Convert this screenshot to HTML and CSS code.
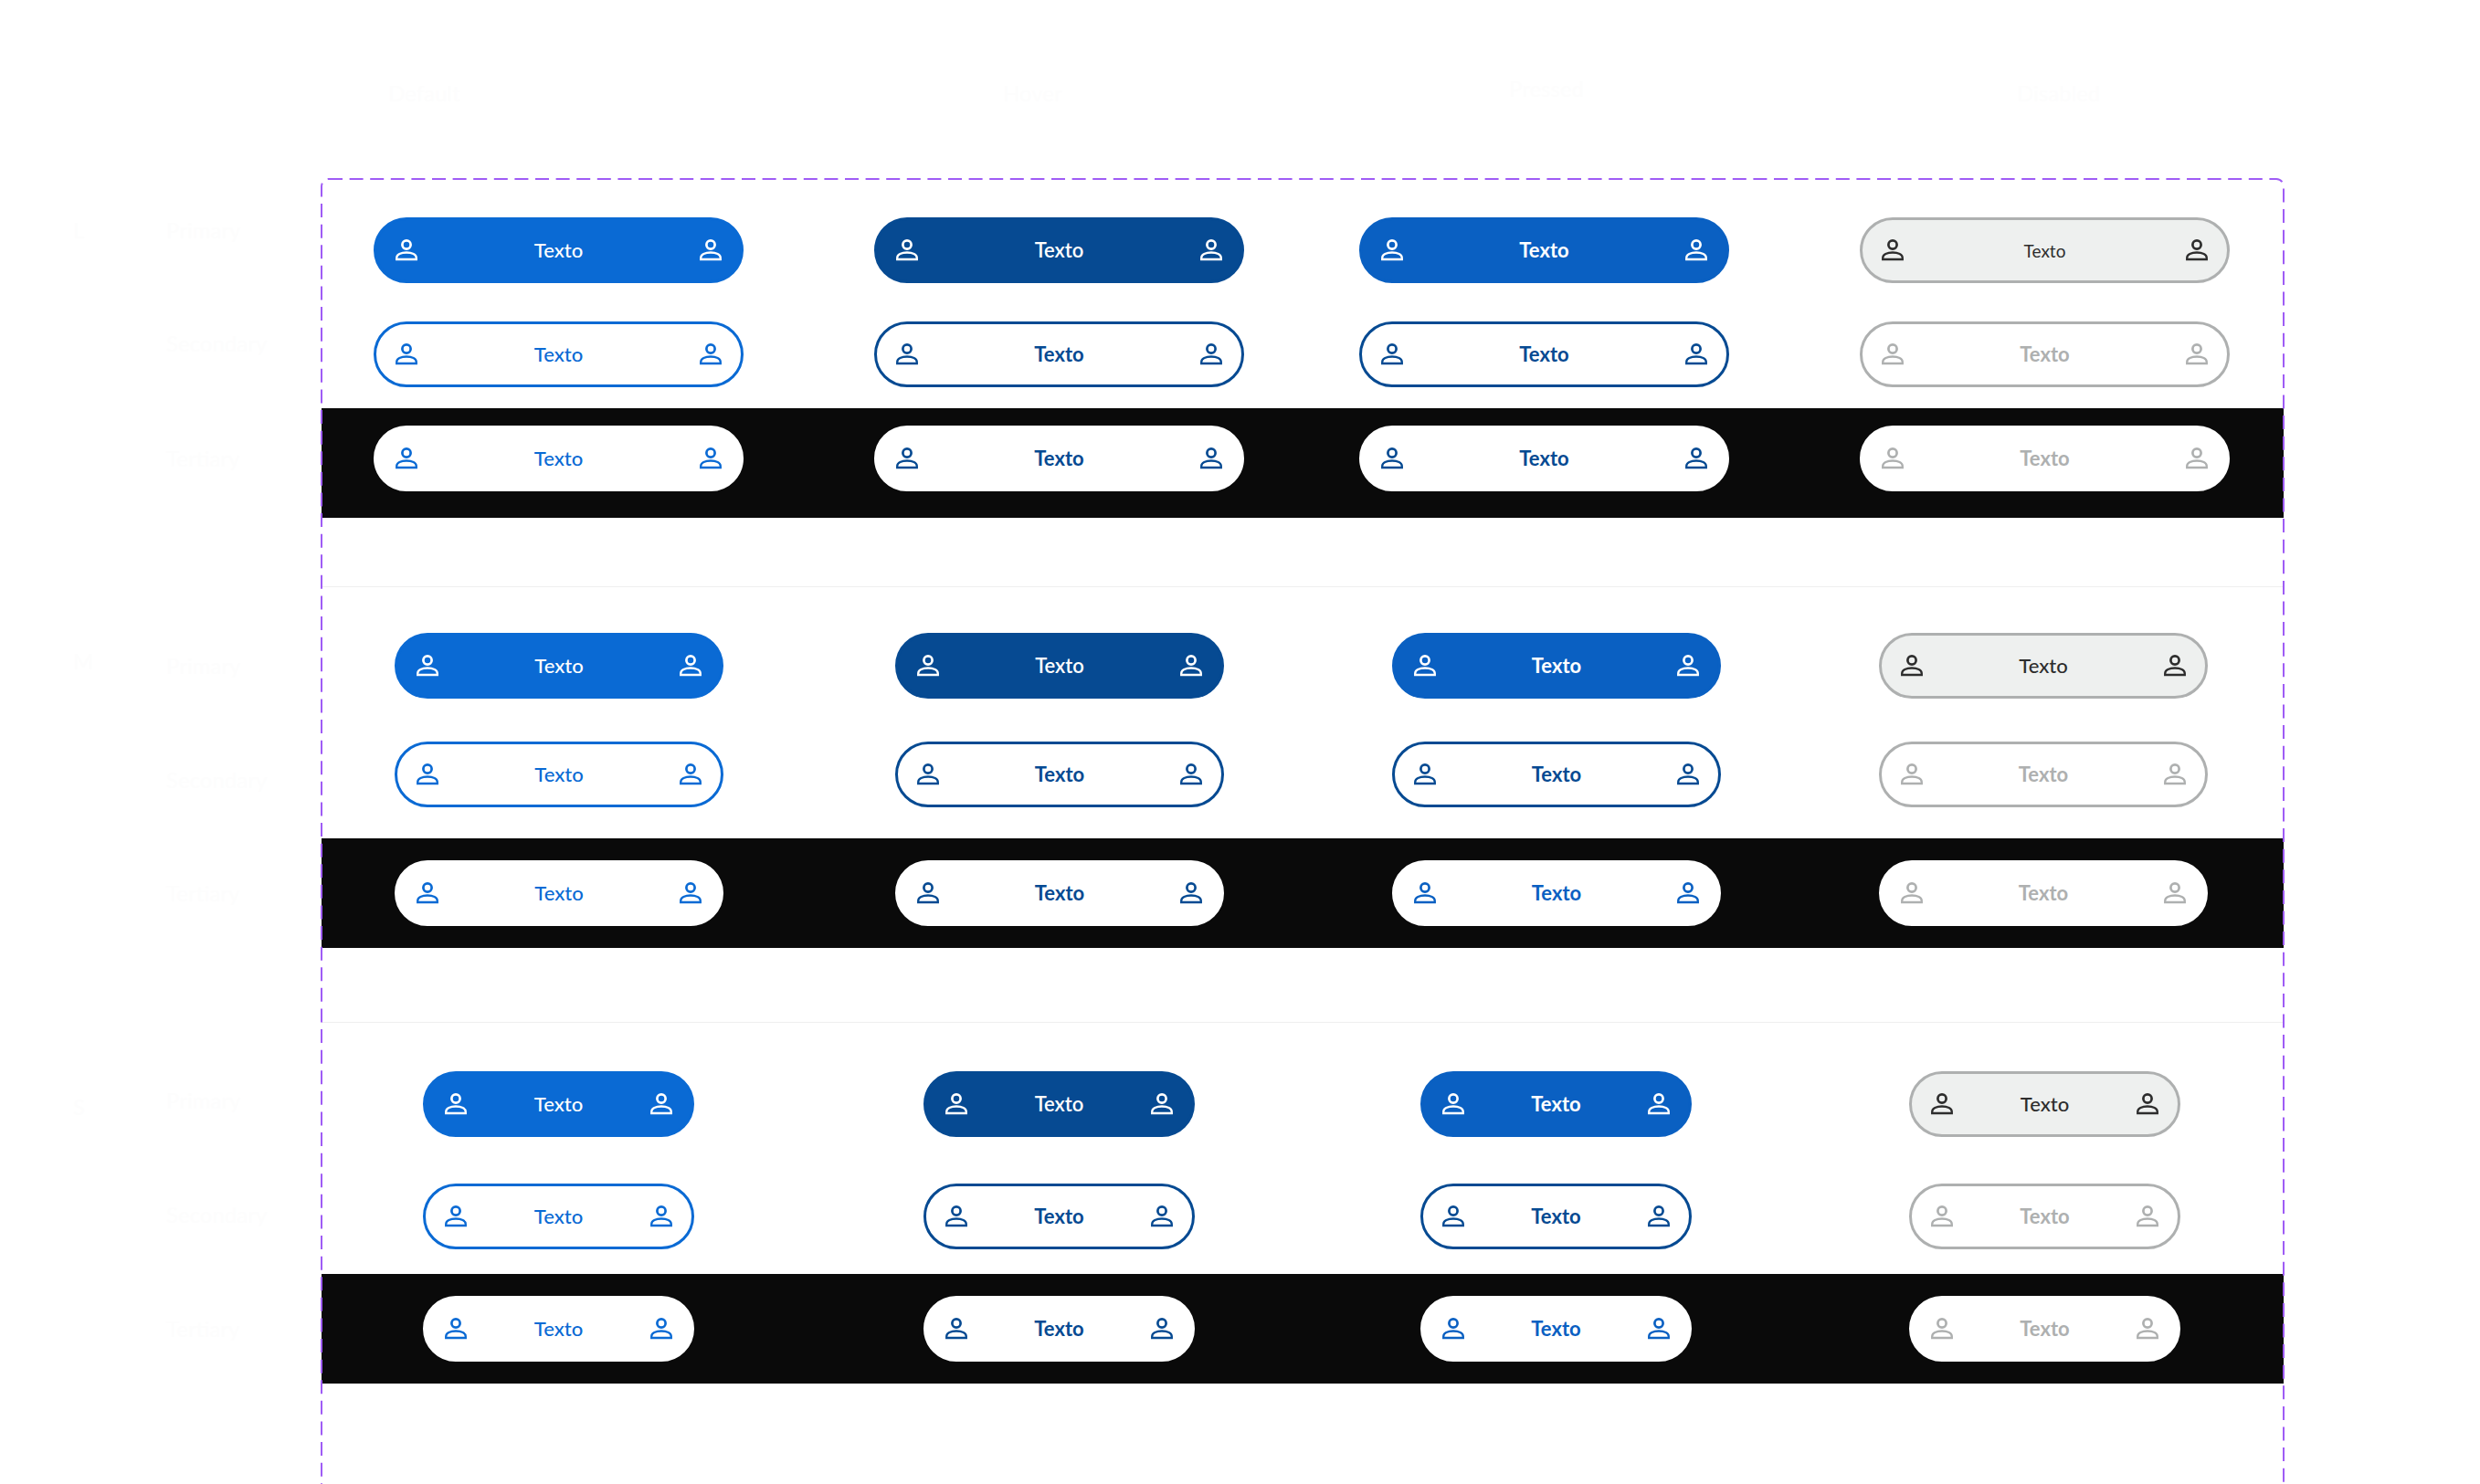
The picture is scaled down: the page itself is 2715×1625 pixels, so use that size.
FILE: index.html
```html
<!DOCTYPE html>
<html lang="pt">
<head>
<meta charset="utf-8">
<title>Botões</title>
<link rel="stylesheet" href="styles.css">
</head>
<body>
<svg class="sprite" width="0" height="0" aria-hidden="true">
  <symbol id="user" viewBox="0 0 24 24">
    <circle cx="12" cy="6" r="4.6" fill="none" stroke="currentColor" stroke-width="2.7"/>
    <path d="M1.2 22v-1.6c0-3.6 4.8-5.9 10.8-5.9s10.8 2.3 10.8 5.9V22z" fill="none" stroke="currentColor" stroke-width="2.3"/>
  </symbol>
</svg>
<div class="page">
  <header class="head">
    <span class="ghost">Default</span>
    <span class="ghost">Hover</span>
    <span class="ghost head-raised">Pressed</span>
    <span class="ghost">Disabled</span>
  </header>

  <svg class="frame" width="2150" height="1500" aria-hidden="true"><rect x="1" y="1" width="2148" height="1600" rx="8"/></svg>

  <section class="size s1">
    <span class="ghost size-name">L</span>
    <div class="row row-primary">
      <span class="ghost row-name">Primary</span>
      <div class="cells">
        <a class="btn fill-default"><svg class="ico"><use href="#user"/></svg><span>Texto</span><svg class="ico"><use href="#user"/></svg></a>
        <a class="btn fill-hover"><svg class="ico"><use href="#user"/></svg><span>Texto</span><svg class="ico"><use href="#user"/></svg></a>
        <a class="btn fill-pressed"><svg class="ico"><use href="#user"/></svg><span>Texto</span><svg class="ico"><use href="#user"/></svg></a>
        <a class="btn fill-disabled small-text"><svg class="ico"><use href="#user"/></svg><span>Texto</span><svg class="ico"><use href="#user"/></svg></a>
      </div>
    </div>
    <div class="row row-secondary">
      <span class="ghost row-name">Secondary</span>
      <div class="cells">
        <a class="btn line-default"><svg class="ico"><use href="#user"/></svg><span>Texto</span><svg class="ico"><use href="#user"/></svg></a>
        <a class="btn line-hover"><svg class="ico"><use href="#user"/></svg><span>Texto</span><svg class="ico"><use href="#user"/></svg></a>
        <a class="btn line-hover"><svg class="ico"><use href="#user"/></svg><span>Texto</span><svg class="ico"><use href="#user"/></svg></a>
        <a class="btn line-disabled"><svg class="ico"><use href="#user"/></svg><span>Texto</span><svg class="ico"><use href="#user"/></svg></a>
      </div>
    </div>
    <div class="row row-tertiary">
      <span class="ghost row-name">Tertiary</span>
      <div class="cells band">
        <a class="btn plain-default"><svg class="ico"><use href="#user"/></svg><span>Texto</span><svg class="ico"><use href="#user"/></svg></a>
        <a class="btn plain-hover"><svg class="ico"><use href="#user"/></svg><span>Texto</span><svg class="ico"><use href="#user"/></svg></a>
        <a class="btn plain-hover"><svg class="ico"><use href="#user"/></svg><span>Texto</span><svg class="ico"><use href="#user"/></svg></a>
        <a class="btn plain-disabled"><svg class="ico"><use href="#user"/></svg><span>Texto</span><svg class="ico"><use href="#user"/></svg></a>
      </div>
    </div>
  </section>

  <section class="size s2">
    <span class="ghost size-name">M</span>
    <div class="row row-primary">
      <span class="ghost row-name">Primary</span>
      <div class="cells">
        <a class="btn fill-default"><svg class="ico"><use href="#user"/></svg><span>Texto</span><svg class="ico"><use href="#user"/></svg></a>
        <a class="btn fill-hover"><svg class="ico"><use href="#user"/></svg><span>Texto</span><svg class="ico"><use href="#user"/></svg></a>
        <a class="btn fill-pressed"><svg class="ico"><use href="#user"/></svg><span>Texto</span><svg class="ico"><use href="#user"/></svg></a>
        <a class="btn fill-disabled"><svg class="ico"><use href="#user"/></svg><span>Texto</span><svg class="ico"><use href="#user"/></svg></a>
      </div>
    </div>
    <div class="row row-secondary">
      <span class="ghost row-name">Secondary</span>
      <div class="cells">
        <a class="btn line-default"><svg class="ico"><use href="#user"/></svg><span>Texto</span><svg class="ico"><use href="#user"/></svg></a>
        <a class="btn line-hover"><svg class="ico"><use href="#user"/></svg><span>Texto</span><svg class="ico"><use href="#user"/></svg></a>
        <a class="btn line-hover"><svg class="ico"><use href="#user"/></svg><span>Texto</span><svg class="ico"><use href="#user"/></svg></a>
        <a class="btn line-disabled"><svg class="ico"><use href="#user"/></svg><span>Texto</span><svg class="ico"><use href="#user"/></svg></a>
      </div>
    </div>
    <div class="row row-tertiary">
      <span class="ghost row-name">Tertiary</span>
      <div class="cells band">
        <a class="btn plain-default"><svg class="ico"><use href="#user"/></svg><span>Texto</span><svg class="ico"><use href="#user"/></svg></a>
        <a class="btn plain-hover"><svg class="ico"><use href="#user"/></svg><span>Texto</span><svg class="ico"><use href="#user"/></svg></a>
        <a class="btn plain-pressed"><svg class="ico"><use href="#user"/></svg><span>Texto</span><svg class="ico"><use href="#user"/></svg></a>
        <a class="btn plain-disabled"><svg class="ico"><use href="#user"/></svg><span>Texto</span><svg class="ico"><use href="#user"/></svg></a>
      </div>
    </div>
  </section>

  <section class="size s3">
    <span class="ghost size-name">S</span>
    <div class="row row-primary">
      <span class="ghost row-name">Primary</span>
      <div class="cells">
        <a class="btn fill-default"><svg class="ico"><use href="#user"/></svg><span>Texto</span><svg class="ico"><use href="#user"/></svg></a>
        <a class="btn fill-hover"><svg class="ico"><use href="#user"/></svg><span>Texto</span><svg class="ico"><use href="#user"/></svg></a>
        <a class="btn fill-pressed"><svg class="ico"><use href="#user"/></svg><span>Texto</span><svg class="ico"><use href="#user"/></svg></a>
        <a class="btn fill-disabled"><svg class="ico"><use href="#user"/></svg><span>Texto</span><svg class="ico"><use href="#user"/></svg></a>
      </div>
    </div>
    <div class="row row-secondary">
      <span class="ghost row-name">Secondary</span>
      <div class="cells">
        <a class="btn line-default"><svg class="ico"><use href="#user"/></svg><span>Texto</span><svg class="ico"><use href="#user"/></svg></a>
        <a class="btn line-hover"><svg class="ico"><use href="#user"/></svg><span>Texto</span><svg class="ico"><use href="#user"/></svg></a>
        <a class="btn line-hover"><svg class="ico"><use href="#user"/></svg><span>Texto</span><svg class="ico"><use href="#user"/></svg></a>
        <a class="btn line-disabled"><svg class="ico"><use href="#user"/></svg><span>Texto</span><svg class="ico"><use href="#user"/></svg></a>
      </div>
    </div>
    <div class="row row-tertiary">
      <span class="ghost row-name">Tertiary</span>
      <div class="cells band">
        <a class="btn plain-default"><svg class="ico"><use href="#user"/></svg><span>Texto</span><svg class="ico"><use href="#user"/></svg></a>
        <a class="btn plain-hover"><svg class="ico"><use href="#user"/></svg><span>Texto</span><svg class="ico"><use href="#user"/></svg></a>
        <a class="btn plain-pressed"><svg class="ico"><use href="#user"/></svg><span>Texto</span><svg class="ico"><use href="#user"/></svg></a>
        <a class="btn plain-disabled"><svg class="ico"><use href="#user"/></svg><span>Texto</span><svg class="ico"><use href="#user"/></svg></a>
      </div>
    </div>
  </section>
</div>
</body>
</html>
```
FILE: styles.css
```css
html, body {
  margin: 0;
  height: 1625px;
  overflow: hidden;
  background: #fff;
}
body {
  font-family: "Lato", "Liberation Sans", sans-serif;
}
.sprite { position: absolute; }
.page {
  position: relative;
  width: 2715px;
  height: 1625px;
  overflow: hidden;
}

/* near-invisible annotations */
.ghost {
  color: #fdfdfd;
  font-size: 24px;
  line-height: 32px;
  white-space: nowrap;
}
.head {
  height: 196px;
  box-sizing: border-box;
  padding: 86px 0 0 425px;
  display: grid;
  grid-template-columns: 673px 554px 556px 1fr;
  align-items: start;
}
.head-raised { margin-top: -5px; }

/* dashed frame */
.frame {
  position: absolute;
  left: 351px;
  top: 195px;
  fill: none;
  stroke: #9f5cf5;
  stroke-width: 2;
  stroke-dasharray: 15 7.6;
  z-index: 2;
}

/* size groups */
.size {
  position: relative;
  display: flex;
  flex-direction: column;
}
.size-name {
  position: absolute;
  left: 80px;
}
.s1 { padding-top: 42px; }
.s1 .size-name { top: 40px; }
.s2 { margin-top: 75px; padding-top: 51px; }
.s2 .size-name { top: 66px; }
.s3 { margin-top: 81px; padding-top: 54px; }
.s3 .size-name { top: 77px; }

.s2::before, .s3::before {
  content: "";
  position: absolute;
  left: 352px;
  width: 2148px;
  top: 0;
  height: 1px;
  background: #efefef;
}

.row {
  display: grid;
  grid-template-columns: 352px 2148px;
}
.row-name {
  padding-left: 182px;
  align-self: center;
}
.s1 .row-secondary { margin-top: 42px; }
.s1 .row-tertiary  { margin-top: 23px; }
.s2 .row-secondary { margin-top: 47px; }
.s2 .row-tertiary  { margin-top: 34px; }
.s3 .row-secondary { margin-top: 51px; }
.s3 .row-tertiary  { margin-top: 27px; }

.s1 .row-primary .row-name { transform: translateY(-22px); }
.s1 .row-secondary .row-name { transform: translateY(-12px); }
.s1 .row-tertiary .row-name { transform: translateY(-5px); }
.s2 .row-secondary .row-name { transform: translateY(6px); }
.s3 .row-primary .row-name { transform: translateY(-4px); }
.s3 .row-secondary .row-name { transform: translateY(-2px); }

.cells {
  display: grid;
  justify-items: start;
}
.s1 .cells { grid-template-columns: 548px 531px 548px 404px; padding-left: 57px; }
.s2 .cells { grid-template-columns: 548px 544px 533px 360px; padding-left: 80px; }
.s3 .cells { grid-template-columns: 548px 544px 535px 297px; padding-left: 111px; }
.s1 .btn { width: 405px; }
.s2 .btn { width: 360px; }
.s3 .btn { width: 297px; }
.band {
  background: #0a0a0a;
  padding-top: 24px;
  padding-bottom: 24px;
}
.s1 .band { padding-top: 19px; padding-bottom: 29px; }

/* button */
.btn {
  box-sizing: border-box;
  height: 72px;
  padding: 0 21px;
  border: 3px solid transparent;
  border-radius: 36px;
  display: flex;
  align-items: center;
  justify-content: space-between;
  font-size: 22px;
  line-height: 26px;
  font-weight: 500;
}
.ico {
  width: 24px;
  height: 24px;
  flex: none;
  color: inherit;
}

.fill-default  { background: #0a6ad4; border-color: #0a6ad4; color: #fff; }
.fill-hover    { background: #064a92; border-color: #064a92; color: #fff; font-weight: 600; }
.fill-pressed  { background: #0a60c2; border-color: #0a60c2; color: #fff; font-weight: 700; }
.fill-disabled { background: #eef0ef; border-color: #aeb0b0; color: #2d2d2d; }
.small-text span { font-size: 19px; font-weight: 400; padding-top: 2px; }

.line-default  { background: #fff; border-color: #0a6ad4; color: #0a6ad4; }
.line-hover    { background: #fff; border-color: #064a92; color: #064a92; font-weight: 700; }
.line-disabled { background: #fff; border-color: #aeb0b0; color: #aeb0b0; font-weight: 700; }

.plain-default  { background: #fff; border-color: #fff; color: #0a6ad4; }
.plain-hover    { background: #fff; border-color: #fff; color: #064a92; font-weight: 700; }
.plain-pressed  { background: #fff; border-color: #fff; color: #0a60c2; font-weight: 700; }
.plain-disabled { background: #fff; border-color: #fff; color: #aeb0b0; font-weight: 700; }
```
